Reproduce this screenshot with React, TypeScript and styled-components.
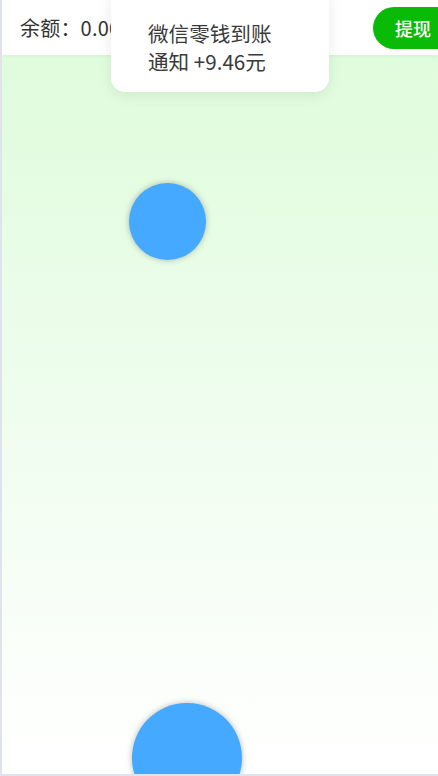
import React from "react";
import styled, { createGlobalStyle } from "styled-components";

const GlobalStyle = createGlobalStyle`
  html, body {
    margin: 0;
    padding: 0;
    overflow: hidden;
    background: #ffffff;
  }
  body {
    font-family: "Noto Sans CJK SC", "Noto Sans", sans-serif;
  }
  * { box-sizing: border-box; }
`;

const Page = styled.div`
  position: relative;
  width: 100vw;
  height: 776px;
  display: flex;
  flex-direction: column;
  border-left: 2px solid #dfe4ec;
  border-bottom: 2px solid #dfe4ec;
  overflow: hidden;
`;

const Header = styled.header`
  position: relative;
  z-index: 2;
  height: 55px;
  flex-shrink: 0;
  display: flex;
  align-items: center;
  justify-content: space-between;
  padding-left: 18px;
  background: #ffffff;
  box-shadow: 0 1px 4px rgba(0, 0, 0, 0.05);
`;

const Balance = styled.div`
  font-size: 20px;
  color: #333333;
  letter-spacing: 0.2px;
`;

const WithdrawButton = styled.button`
  height: 42px;
  width: 90px;
  margin-right: -25px;
  padding: 0 0 0 22px;
  border: none;
  border-radius: 21px 0 0 21px;
  background: #09bb07;
  color: #ffffff;
  font-family: inherit;
  font-size: 18px;
  font-weight: 500;
  text-align: left;
  cursor: pointer;
`;

const Field = styled.main`
  position: relative;
  flex: 1;
  background: linear-gradient(180deg, #dffcdc 0%, #effdee 50%, #ffffff 100%);
`;

const Ball = styled.div<{ $size: number }>`
  position: absolute;
  width: ${(p) => p.$size}px;
  height: ${(p) => p.$size}px;
  border-radius: 50%;
  background: #44a9ff;
  box-shadow: 0 0 6px rgba(0, 0, 0, 0.28);
`;

const Toast = styled.div`
  position: absolute;
  z-index: 5;
  top: -20px;
  left: 109px;
  width: 218px;
  padding: 39px 0 17px 37px;
  background: #ffffff;
  border-radius: 14px;
  box-shadow: 0 4px 14px rgba(0, 0, 0, 0.08);
`;

const ToastText = styled.div`
  max-width: 136px;
  font-size: 20.6px;
  line-height: 28px;
  color: #3a3a3a;
`;

const balls = [
  { id: 1, x: 127, y: 128, size: 77 },
  { id: 2, x: 130, y: 648, size: 110 },
];

export default function App() {
  return (
    <>
      <GlobalStyle />
      <Page>
        <Header>
          <Balance>余额：0.00</Balance>
          <WithdrawButton>提现</WithdrawButton>
        </Header>
        <Field>
          {balls.map((b) => (
            <Ball key={b.id} $size={b.size} style={{ left: b.x, top: b.y }} />
          ))}
        </Field>
        <Toast>
          <ToastText>微信零钱到账通知 +9.46元</ToastText>
        </Toast>
      </Page>
    </>
  );
}
